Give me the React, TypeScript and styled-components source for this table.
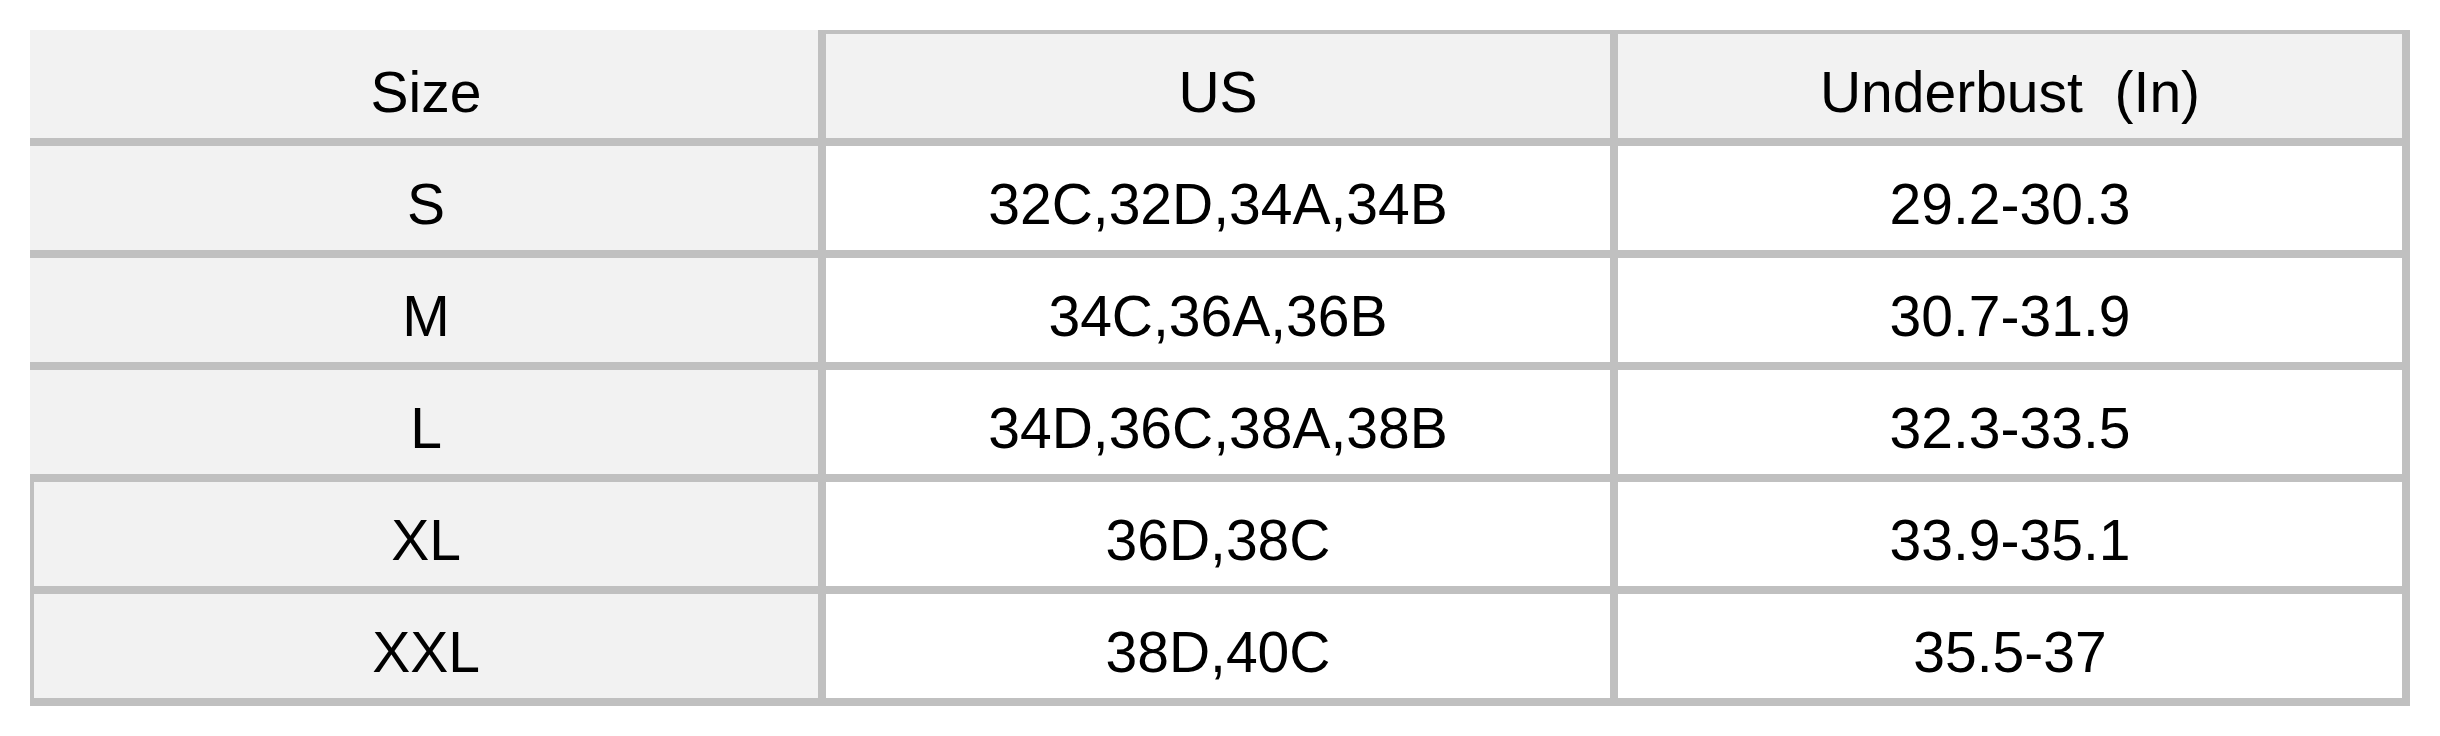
import React from 'react';
import styled, {createGlobalStyle} from "styled-components";

const GlobalStyle = createGlobalStyle`
  html, body {
    margin: 0;
    padding: 0;
    background: #ffffff;
  }

  body {
    font-family: "Liberation Sans", Arial, sans-serif;
    color: #000000;
  }
`;

type Row = {
    size: string,
    us: string,
    underbust: string
}

const rows: Row[] = [
    {size: 'S', us: '32C,32D,34A,34B', underbust: '29.2-30.3'},
    {size: 'M', us: '34C,36A,36B', underbust: '30.7-31.9'},
    {size: 'L', us: '34D,36C,38A,38B', underbust: '32.3-33.5'},
    {size: 'XL', us: '36D,38C', underbust: '33.9-35.1'},
    {size: 'XXL', us: '38D,40C', underbust: '35.5-37'},
];

function App() {
    return (
        <Page>
            <GlobalStyle/>
            <Table>
                <Cell $first $corner>Size</Cell>
                <Cell $shade>US</Cell>
                <Cell $shade>Underbust&nbsp; (In)</Cell>

                {rows.map((row, i) => (
                    <React.Fragment key={row.size}>
                        <Cell $first $edge={i >= 3}>{row.size}</Cell>
                        <Cell>{row.us}</Cell>
                        <Cell>{row.underbust}</Cell>
                    </React.Fragment>
                ))}
            </Table>
        </Page>
    );
}


const Page = styled.div`
  padding: 30px 0 0 30px;
`;

const Table = styled.div`
  display: grid;
  grid-template-columns: repeat(3, 784px);
  grid-auto-rows: 104px;
  gap: 8px;
  width: max-content;
  padding: 4px 8px 8px 4px;
  background: #c0c0c0;
`;

type CellProps = {
    $first?: boolean,
    $shade?: boolean,
    $corner?: boolean,
    $edge?: boolean
}

const Cell = styled.div<CellProps>`
  display: flex;
  justify-content: center;
  align-items: center;
  padding-top: 12px;
  box-sizing: border-box;
  background: ${p => (p.$first || p.$shade) ? '#f2f2f2' : '#ffffff'};
  font-size: 57px;
  white-space: pre;
  box-shadow: ${p => p.$corner
    ? '-4px 0 0 #f2f2f2, 0 -4px 0 #f2f2f2, -4px -4px 0 #f2f2f2'
    : (p.$first && !p.$edge ? '-4px 0 0 #f2f2f2' : 'none')};
`;


export default App;
